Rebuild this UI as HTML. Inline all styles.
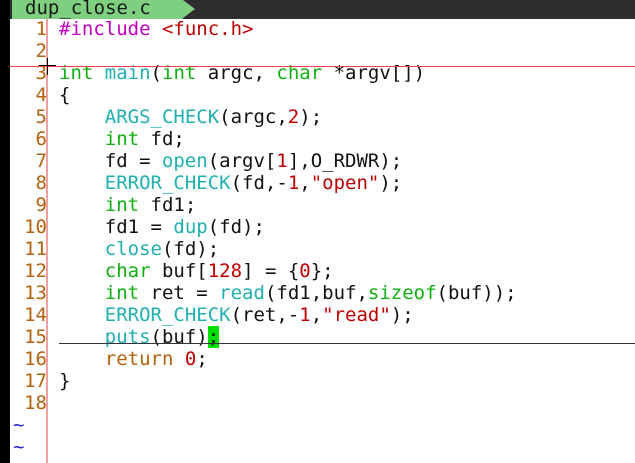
<!DOCTYPE html><html><head><style>
body{margin:0;width:635px;height:463px;background:#fff;overflow:hidden;position:relative;font-family:"DejaVu Sans Mono","Liberation Mono",monospace;font-size:19px}
#tab{position:absolute;left:0;top:0;width:635px;height:19px;background:#2f2d30}
#tg{position:absolute;left:12px;top:0;width:171px;height:19px;background:#7fcf80;color:#1a1a1a;line-height:17px;padding-left:13px;box-sizing:border-box}
#ar{position:absolute;left:183px;top:0;border-left:12px solid #7fcf80;border-top:9.5px solid transparent;border-bottom:9.5px solid transparent}
#lb{position:absolute;left:0;top:0;width:10px;height:463px;background:#000}
#sep{position:absolute;left:46px;top:19px;width:2px;height:444px;background:#f0a0a0}
.l{position:absolute;left:0;height:22px;line-height:22px;white-space:pre}
.n{position:absolute;left:10px;width:37px;text-align:right;color:#b5620e}
.c{position:absolute;left:59px;color:#111}
.k{color:#10b010}.f{color:#20b0b0}.r{color:#c00000}.m{color:#c000c0}.o{color:#b5620e}
</style></head><body>
<div id="tab"><div id="tg">dup_close.c</div><div id="ar"></div></div>
<div id="lb"></div>
<div class="l" style="top:18px"><span class="n">1</span><span class="c"><span class="m">#include</span> <span class="r">&lt;func.h&gt;</span></span></div>
<div class="l" style="top:40px"><span class="n">2</span></div>
<div class="l" style="top:62px"><span class="n">3</span><span class="c"><span class="k">int</span> <span class="f">main</span>(<span class="k">int</span> argc, <span class="k">char</span> *argv[])</span></div>
<div class="l" style="top:84px"><span class="n">4</span><span class="c">{</span></div>
<div class="l" style="top:106px"><span class="n">5</span><span class="c">    <span class="f">ARGS_CHECK</span>(argc,<span class="r">2</span>);</span></div>
<div class="l" style="top:128px"><span class="n">6</span><span class="c">    <span class="k">int</span> fd;</span></div>
<div class="l" style="top:150px"><span class="n">7</span><span class="c">    fd = <span class="f">open</span>(argv[<span class="r">1</span>],O_RDWR);</span></div>
<div class="l" style="top:172px"><span class="n">8</span><span class="c">    <span class="f">ERROR_CHECK</span>(fd,-<span class="r">1</span>,<span class="r">"open"</span>);</span></div>
<div class="l" style="top:194px"><span class="n">9</span><span class="c">    <span class="k">int</span> fd1;</span></div>
<div class="l" style="top:216px"><span class="n">10</span><span class="c">    fd1 = <span class="f">dup</span>(fd);</span></div>
<div class="l" style="top:238px"><span class="n">11</span><span class="c">    <span class="f">close</span>(fd);</span></div>
<div class="l" style="top:260px"><span class="n">12</span><span class="c">    <span class="k">char</span> buf[<span class="r">128</span>] = {<span class="r">0</span>};</span></div>
<div class="l" style="top:282px"><span class="n">13</span><span class="c">    <span class="k">int</span> ret = <span class="f">read</span>(fd1,buf,<span class="k">sizeof</span>(buf));</span></div>
<div class="l" style="top:304px"><span class="n">14</span><span class="c">    <span class="f">ERROR_CHECK</span>(ret,-<span class="r">1</span>,<span class="r">"read"</span>);</span></div>
<div class="l" style="top:326px"><span class="n">15</span><span class="c">    <span class="f">puts</span>(buf)<span style="background:#00e000">;</span></span></div>
<div class="l" style="top:348px"><span class="n">16</span><span class="c">    <span class="o">return</span> <span class="r">0</span>;</span></div>
<div class="l" style="top:370px"><span class="n">17</span><span class="c">}</span></div>
<div class="l" style="top:392px"><span class="n">18</span></div>
<div class="l" style="top:414px;left:13px;color:#2020e0">~</div>
<div class="l" style="top:436px;left:13px;color:#2020e0">~</div>
<div id="sep"></div>
<div style="position:absolute;left:10px;top:66px;width:625px;height:1px;background:#f04050"></div>
<div style="position:absolute;left:59px;top:343px;width:576px;height:1px;background:#333"></div>
<div style="position:absolute;left:47px;top:58px;width:1px;height:17px;background:#000"></div>
<div style="position:absolute;left:39px;top:65px;width:17px;height:1px;background:#000"></div>
</body></html>
